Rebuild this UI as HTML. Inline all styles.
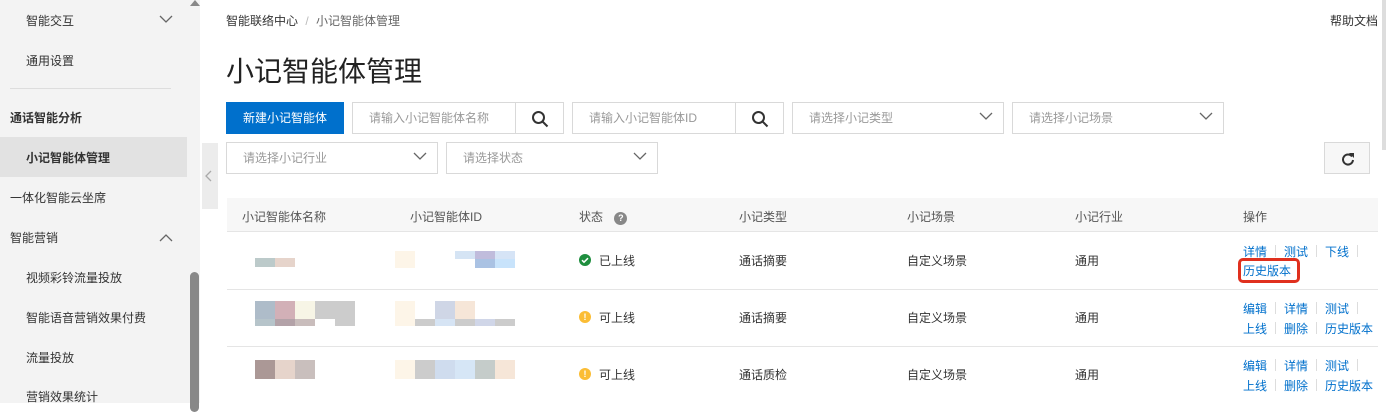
<!DOCTYPE html>
<html><head><meta charset="utf-8"><style>
*{margin:0;padding:0;box-sizing:border-box}
body{width:1386px;height:403px;overflow:hidden;background:#fff;font-family:"Liberation Sans","Noto Sans CJK SC",sans-serif;font-size:12px;color:#333;position:relative}
.a{position:absolute}
.side{left:0;top:0;width:187px;height:403px;background:#f3f3f3}
.side div{position:absolute;white-space:nowrap;font-size:12px;color:#333}
.box{position:absolute;border:1px solid #d9d9d9;background:#fff;color:#999;font-size:12px;padding-left:16px;line-height:30px}
.chev{position:absolute;right:10px;top:8px}
.t{position:absolute;white-space:nowrap}
.lk{color:#0070cc}
.sep{display:inline-block;width:1px;height:12px;background:#ddd;margin:0 8px;vertical-align:-1px}
</style></head><body>
<div class="a side">
<div style="left:26px;top:12px">智能交互</div>
<svg class="a" style="left:159px;top:14px" width="14" height="10"><path d="M1 2l6 6 6-6" stroke="#666" fill="none" stroke-width="1.3"/></svg>
<div style="left:26px;top:52px">通用设置</div>
<div style="left:10px;top:88px;width:161px;height:1px;background:#ddd"></div>
<div style="left:10px;top:109px;font-weight:bold">通话智能分析</div>
<div style="left:0;top:137px;width:187px;height:40px;background:#e2e2e2"></div>
<div style="left:26px;top:149px;font-weight:bold">小记智能体管理</div>
<div style="left:10px;top:189px">一体化智能云坐席</div>
<div style="left:10px;top:229px">智能营销</div>
<svg class="a" style="left:159px;top:233px" width="14" height="10"><path d="M1 8l6-6 6 6" stroke="#666" fill="none" stroke-width="1.3"/></svg>
<div style="left:26px;top:269px">视频彩铃流量投放</div>
<div style="left:26px;top:309px">智能语音营销效果付费</div>
<div style="left:26px;top:349px">流量投放</div>
<div style="left:26px;top:388px">营销效果统计</div>
</div>
<div class="a" style="left:187px;top:0;width:13px;height:403px;background:#f3f3f3"></div>
<div class="a" style="left:190px;top:272px;width:9px;height:140px;background:#888;border-radius:5px"></div>
<svg class="a" style="left:190px;top:0" width="10" height="6"><path d="M0 6L5 0 10 6z" fill="#888"/></svg>
<div class="a" style="left:202px;top:143px;width:16px;height:66px;background:#ececec"></div>
<svg class="a" style="left:205px;top:170px" width="8" height="12"><path d="M6 1L1 6l5 5" stroke="#aaa" fill="none" stroke-width="1.3"/></svg>

<div class="t" style="left:226px;top:12px;color:#333">智能联络中心 <span style="color:#bbb;margin:0 4px">/</span> <span style="color:#666">小记智能体管理</span></div>
<div class="t" style="left:1330px;top:12px">帮助文档</div>
<div class="t" style="left:226px;top:50px;font-size:28px;color:#222">小记智能体管理</div>

<div class="a" style="left:226px;top:102px;width:118px;height:32px;background:#0070cc;color:#fff;text-align:center;line-height:32px">新建小记智能体</div>
<div class="box" style="left:352px;top:102px;width:164px;height:32px">请输入小记智能体名称</div>
<div class="box" style="left:515px;top:102px;width:49px;height:32px;padding:0"><svg class="a" style="left:15px;top:7px" width="18" height="18"><circle cx="7.5" cy="7.5" r="5.5" stroke="#333" stroke-width="2" fill="none"/><path d="M11.5 11.5l5 5" stroke="#333" stroke-width="2"/></svg></div>
<div class="box" style="left:572px;top:102px;width:164px;height:32px">请输入小记智能体ID</div>
<div class="box" style="left:735px;top:102px;width:49px;height:32px;padding:0"><svg class="a" style="left:15px;top:7px" width="18" height="18"><circle cx="7.5" cy="7.5" r="5.5" stroke="#333" stroke-width="2" fill="none"/><path d="M11.5 11.5l5 5" stroke="#333" stroke-width="2"/></svg></div>
<div class="box" style="left:792px;top:102px;width:212px;height:32px">请选择小记类型<svg class="chev" width="14" height="10"><path d="M1 2l6 6 6-6" stroke="#666" fill="none" stroke-width="1.3"/></svg></div>
<div class="box" style="left:1012px;top:102px;width:212px;height:32px">请选择小记场景<svg class="chev" width="14" height="10"><path d="M1 2l6 6 6-6" stroke="#666" fill="none" stroke-width="1.3"/></svg></div>
<div class="box" style="left:226px;top:142px;width:212px;height:32px">请选择小记行业<svg class="chev" width="14" height="10"><path d="M1 2l6 6 6-6" stroke="#666" fill="none" stroke-width="1.3"/></svg></div>
<div class="box" style="left:446px;top:142px;width:212px;height:32px">请选择状态<svg class="chev" width="14" height="10"><path d="M1 2l6 6 6-6" stroke="#666" fill="none" stroke-width="1.3"/></svg></div>
<div class="box" style="left:1324px;top:142px;width:46px;height:32px;background:#f7f7f7;padding:0"><svg class="a" style="left:16px;top:9px" width="14" height="14"><path d="M11 4.5A5 5 0 1 0 12 8" stroke="#333" stroke-width="2" fill="none"/><path d="M8 1h5v5z" fill="#333"/></svg></div>

<div class="a" style="left:227px;top:198px;width:1151px;height:34px;background:#f7f7f7;border-bottom:1px solid #e5e5e5"></div>
<div class="t" style="left:242px;top:208px;color:#555">小记智能体名称</div>
<div class="t" style="left:410px;top:208px;color:#555">小记智能体ID</div>
<div class="t" style="left:579px;top:208px;color:#555">状态 <span style="display:inline-block;width:13px;height:13px;border-radius:50%;background:#888;color:#fff;font-size:9px;text-align:center;line-height:13px;margin-left:8px;font-weight:bold">?</span></div>
<div class="t" style="left:739px;top:208px;color:#555">小记类型</div>
<div class="t" style="left:907px;top:208px;color:#555">小记场景</div>
<div class="t" style="left:1075px;top:208px;color:#555">小记行业</div>
<div class="t" style="left:1243px;top:208px;color:#555">操作</div>
<div class="a" style="left:227px;top:289px;width:1151px;height:1px;background:#e5e5e5"></div>
<div class="a" style="left:227px;top:346px;width:1151px;height:1px;background:#e5e5e5"></div>

<!-- mosaics row1 -->
<div class="a" style="left:255px;top:258px;width:20px;height:9px;background:#bccaca"></div>
<div class="a" style="left:275px;top:258px;width:20px;height:9px;background:#e6d4cb"></div>
<div class="a" style="left:395px;top:251px;width:20px;height:17px;background:#fdf5e8"></div>
<div class="a" style="left:455px;top:251px;width:20px;height:8px;background:#d5e4f4"></div>
<div class="a" style="left:475px;top:251px;width:20px;height:8px;background:#c0bcdc"></div>
<div class="a" style="left:495px;top:251px;width:20px;height:8px;background:#d6e4f6"></div>
<div class="a" style="left:475px;top:259px;width:20px;height:9px;background:#aac2e3"></div>
<div class="a" style="left:495px;top:259px;width:20px;height:9px;background:#c8e3fb"></div>
<!-- row2 -->
<div class="a" style="left:255px;top:301px;width:20px;height:18px;background:#aebcc9"></div>
<div class="a" style="left:275px;top:301px;width:20px;height:18px;background:#d2b0b7"></div>
<div class="a" style="left:295px;top:301px;width:20px;height:18px;background:#f7f5e6"></div>
<div class="a" style="left:315px;top:301px;width:40px;height:18px;background:#cccccc"></div>
<div class="a" style="left:255px;top:319px;width:20px;height:7px;background:#b6c4ca"></div>
<div class="a" style="left:275px;top:319px;width:20px;height:7px;background:#b3a2a8"></div>
<div class="a" style="left:295px;top:319px;width:20px;height:7px;background:#c9bdbc"></div>
<div class="a" style="left:335px;top:319px;width:20px;height:7px;background:#cccccc"></div>
<div class="a" style="left:395px;top:301px;width:20px;height:25px;background:#fdf5e8"></div>
<div class="a" style="left:435px;top:301px;width:20px;height:18px;background:#cfd6e6"></div>
<div class="a" style="left:455px;top:301px;width:20px;height:18px;background:#f6e6d8"></div>
<div class="a" style="left:415px;top:319px;width:20px;height:7px;background:#cccccc"></div>
<div class="a" style="left:435px;top:319px;width:20px;height:7px;background:#d6e4f4"></div>
<div class="a" style="left:455px;top:319px;width:20px;height:7px;background:#cccccc"></div>
<div class="a" style="left:475px;top:319px;width:20px;height:7px;background:#d0d6e8"></div>
<div class="a" style="left:495px;top:319px;width:20px;height:7px;background:#cccccc"></div>
<!-- row3 -->
<div class="a" style="left:255px;top:360px;width:20px;height:19px;background:#ab9896"></div>
<div class="a" style="left:275px;top:360px;width:20px;height:19px;background:#e6d4cb"></div>
<div class="a" style="left:295px;top:360px;width:20px;height:19px;background:#c9bfbd"></div>
<div class="a" style="left:395px;top:360px;width:20px;height:19px;background:#fdf5e8"></div>
<div class="a" style="left:415px;top:360px;width:20px;height:19px;background:#cccccc"></div>
<div class="a" style="left:435px;top:360px;width:20px;height:19px;background:#cfdcee"></div>
<div class="a" style="left:455px;top:360px;width:20px;height:19px;background:#d6e6f6"></div>
<div class="a" style="left:475px;top:360px;width:20px;height:19px;background:#c5ccca"></div>
<div class="a" style="left:495px;top:360px;width:20px;height:19px;background:#f6e6d8"></div>

<!-- status -->
<div class="a" style="left:579px;top:254px;width:12px;height:12px;border-radius:50%;background:#1e8e3e"></div>
<svg class="a" style="left:579px;top:254px" width="12" height="12"><path d="M3 6.2l2 2 4-4" stroke="#fff" stroke-width="1.5" fill="none"/></svg>
<div class="t" style="left:599px;top:252px">已上线</div>
<div class="a" style="left:579px;top:311px;width:12px;height:12px;border-radius:50%;background:#fbbd35;color:#fff;font-size:9px;font-weight:bold;text-align:center;line-height:12px">!</div>
<div class="t" style="left:599px;top:309px">可上线</div>
<div class="a" style="left:579px;top:368px;width:12px;height:12px;border-radius:50%;background:#fbbd35;color:#fff;font-size:9px;font-weight:bold;text-align:center;line-height:12px">!</div>
<div class="t" style="left:599px;top:366px">可上线</div>

<div class="t" style="left:739px;top:252px">通话摘要</div><div class="t" style="left:907px;top:252px">自定义场景</div><div class="t" style="left:1075px;top:252px">通用</div>
<div class="t" style="left:739px;top:309px">通话摘要</div><div class="t" style="left:907px;top:309px">自定义场景</div><div class="t" style="left:1075px;top:309px">通用</div>
<div class="t" style="left:739px;top:366px">通话质检</div><div class="t" style="left:907px;top:366px">自定义场景</div><div class="t" style="left:1075px;top:366px">通用</div>

<div class="t lk" style="left:1243px;top:243px">详情<span class="sep"></span>测试<span class="sep"></span>下线<span class="sep"></span></div>
<div class="t lk" style="left:1243px;top:262px">历史版本</div>
<div class="a" style="left:1238px;top:258px;width:62px;height:25px;border:3px solid #e0301e;border-radius:5px"></div>
<div class="t lk" style="left:1243px;top:300px">编辑<span class="sep"></span>详情<span class="sep"></span>测试<span class="sep"></span></div>
<div class="t lk" style="left:1243px;top:320px">上线<span class="sep"></span>删除<span class="sep"></span>历史版本</div>
<div class="t lk" style="left:1243px;top:357px">编辑<span class="sep"></span>详情<span class="sep"></span>测试<span class="sep"></span></div>
<div class="t lk" style="left:1243px;top:377px">上线<span class="sep"></span>删除<span class="sep"></span>历史版本</div>
<div class="a" style="left:1382px;top:0;width:4px;height:150px;background:#ddd"></div>
</body></html>
